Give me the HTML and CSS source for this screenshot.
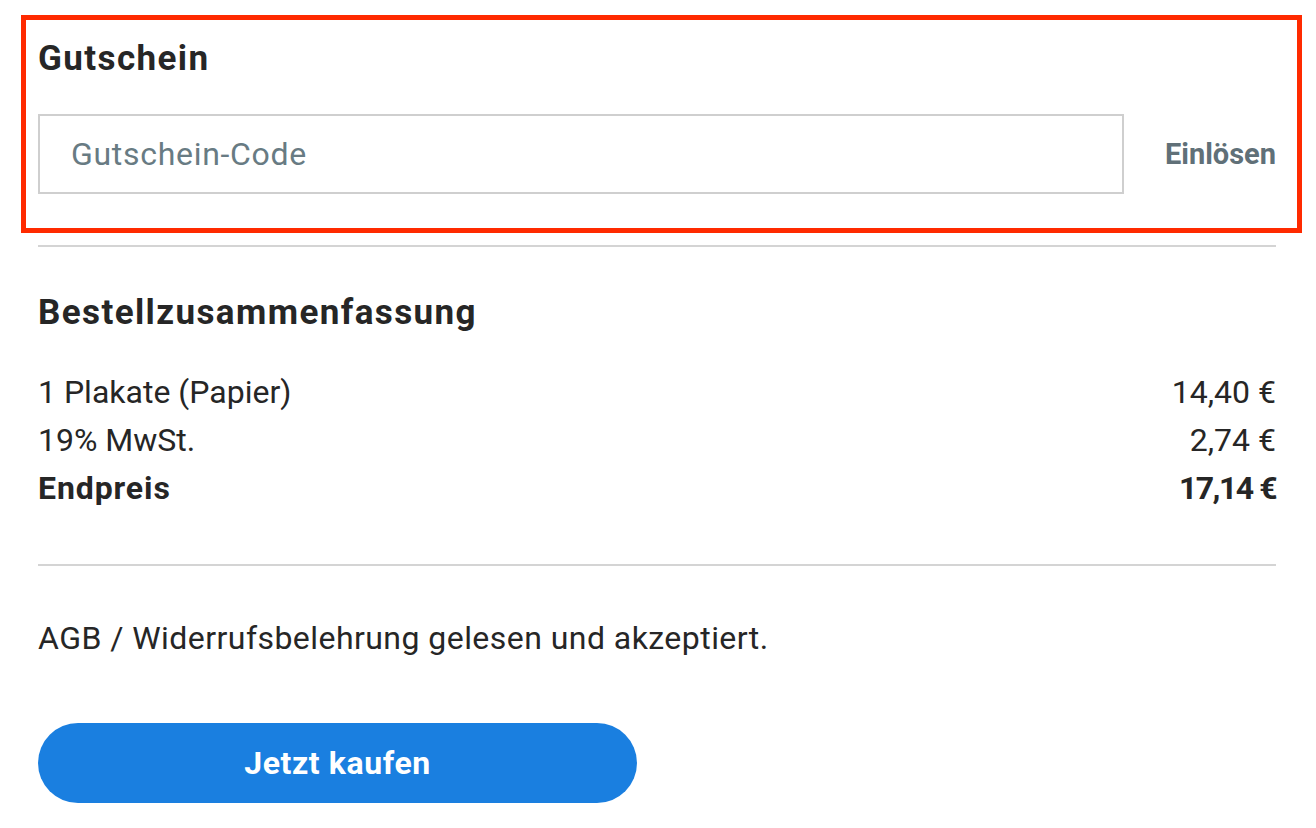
FILE: index.html
```html
<!DOCTYPE html>
<html lang="de">
<head>
<meta charset="utf-8">
<title>Kasse</title>
<link rel="stylesheet" href="styles.css">
</head>
<body>
<div class="page">
  <section class="coupon">
    <h2 class="title">Gutschein</h2>
    <div class="coupon-row">
      <input class="coupon-input" type="text" placeholder="Gutschein-Code">
      <button class="redeem" type="button">Einlösen</button>
    </div>
    <div class="highlight"></div>
  </section>
  <hr class="divider">
  <section class="summary">
    <h2 class="title">Bestellzusammenfassung</h2>
    <div class="rows">
      <div class="row"><span>1 Plakate (Papier)</span><span>14,40 €</span></div>
      <div class="row"><span>19% MwSt.</span><span>2,74 €</span></div>
      <div class="row total"><span class="label">Endpreis</span><span class="amount">17,14 €</span></div>
    </div>
  </section>
  <hr class="divider">
  <p class="terms">AGB / Widerrufsbelehrung gelesen und akzeptiert.</p>
  <button class="buy" type="button">Jetzt kaufen</button>
</div>
</body>
</html>
```

FILE: styles.css
```css
* { box-sizing: border-box; }
html, body { margin: 0; padding: 0; background: #fff; }
body {
  font-family: Roboto, "Liberation Sans", sans-serif;
  color: #262626;
}
.page {
  width: 1316px;
  padding: 0 40px 0 38px;
}
.coupon {
  position: relative;
  padding-top: 39px;
  padding-bottom: 51px;
}
.title {
  margin: 0;
  font-size: 35px;
  line-height: 40px;
  font-weight: 700;
  letter-spacing: 1.4px;
  color: #262626;
}
.coupon-row {
  margin-top: 35px;
  display: flex;
  align-items: center;
}
.coupon-input {
  flex: 1;
  height: 80px;
  border: 2px solid #cfcfcf;
  padding: 0 0 0 31px;
  font-family: inherit;
  font-size: 32px;
  letter-spacing: 0.7px;
  color: #262626;
  outline: none;
  border-radius: 0;
}
.coupon-input::placeholder { color: #687b83; }
.redeem {
  margin-left: 41px;
  padding: 0;
  border: none;
  background: none;
  font-family: inherit;
  font-size: 29px;
  font-weight: 700;
  color: #607078;
}
.highlight {
  position: absolute;
  left: -17px;
  right: -26px;
  top: 15px;
  height: 218px;
  border: 5px solid #ff2a00;
  pointer-events: none;
}
.divider {
  margin: 0;
  border: none;
  height: 2px;
  background: #d4d4d4;
}
.summary {
  padding-top: 46px;
  padding-bottom: 52px;
}
.rows { margin-top: 35px; }
.row {
  display: flex;
  justify-content: space-between;
  font-size: 32px;
  line-height: 48px;
}
.row.total { font-weight: 700; }
.row.total .label { letter-spacing: 0.9px; }
.row.total .amount { letter-spacing: -1.5px; }
.terms {
  margin: 48px 0 0;
  font-size: 32px;
  line-height: 48px;
  letter-spacing: 0.45px;
}
.buy {
  margin-top: 61px;
  width: 599px;
  height: 80px;
  border: none;
  border-radius: 40px;
  background: #1a7fe0;
  color: #fff;
  font-family: inherit;
  font-size: 32px;
  font-weight: 700;
  letter-spacing: 0.6px;
}
```
